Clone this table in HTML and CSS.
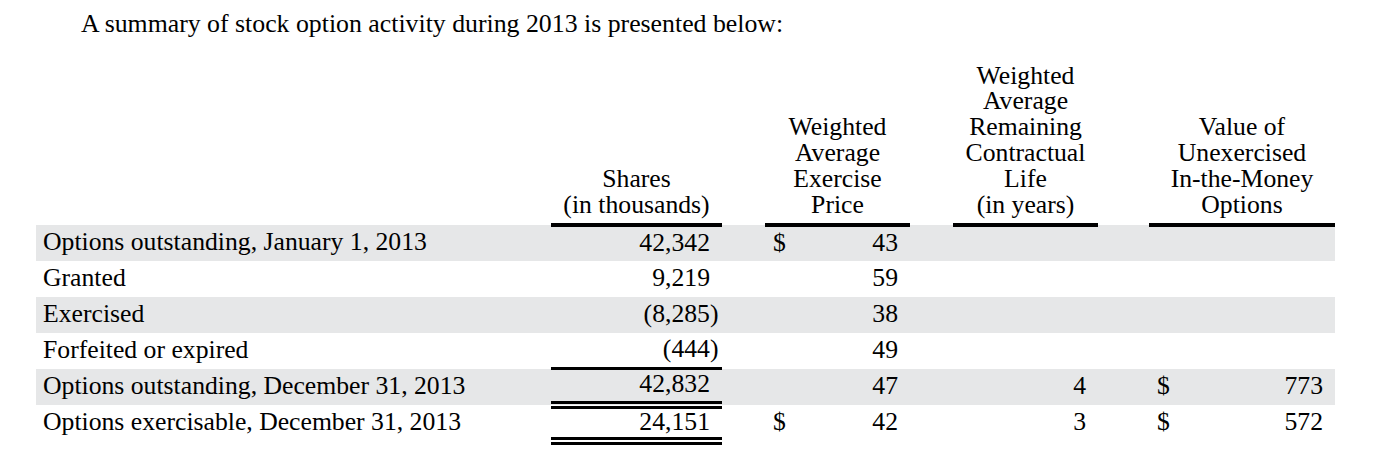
FILE: index.html
```html
<!DOCTYPE html>
<html lang="en">
<head>
<meta charset="utf-8">
<title>Stock option activity</title>
<link rel="stylesheet" href="styles.css">
</head>
<body>
<div class="page">
  <p class="intro">A summary of stock option activity during 2013 is presented below:</p>
  <div class="table">
    <div class="row head">
      <div class="cell"></div>
      <div class="cell hd">Shares<br>(in thousands)</div>
      <div class="cell"></div>
      <div class="cell hd">Weighted<br>Average<br>Exercise<br>Price</div>
      <div class="cell"></div>
      <div class="cell hd">Weighted<br>Average<br>Remaining<br>Contractual<br>Life<br>(in years)</div>
      <div class="cell"></div>
      <div class="cell hd">Value of<br>Unexercised<br>In-the-Money<br>Options</div>
    </div>
    <div class="row shade first">
      <div class="cell label">Options outstanding, January 1, 2013</div>
      <div class="cell num col">42,342</div>
      <div class="cell"></div>
      <div class="cell num cur col"><span>$</span><span>43</span></div>
      <div class="cell"></div>
      <div class="cell num col"></div>
      <div class="cell"></div>
      <div class="cell num col"></div>
    </div>
    <div class="row">
      <div class="cell label">Granted</div>
      <div class="cell num">9,219</div>
      <div class="cell"></div>
      <div class="cell num">59</div>
      <div class="cell"></div>
      <div class="cell num"></div>
      <div class="cell"></div>
      <div class="cell num"></div>
    </div>
    <div class="row shade">
      <div class="cell label">Exercised</div>
      <div class="cell num">(8,285<span class="paren">)</span></div>
      <div class="cell"></div>
      <div class="cell num">38</div>
      <div class="cell"></div>
      <div class="cell num"></div>
      <div class="cell"></div>
      <div class="cell num"></div>
    </div>
    <div class="row">
      <div class="cell label">Forfeited or expired</div>
      <div class="cell num rule-below">(444<span class="paren">)</span></div>
      <div class="cell"></div>
      <div class="cell num">49</div>
      <div class="cell"></div>
      <div class="cell num"></div>
      <div class="cell"></div>
      <div class="cell num"></div>
    </div>
    <div class="row shade">
      <div class="cell label">Options outstanding, December 31, 2013</div>
      <div class="cell num rule-above dbl-below">42,832</div>
      <div class="cell"></div>
      <div class="cell num">47</div>
      <div class="cell"></div>
      <div class="cell num">4</div>
      <div class="cell"></div>
      <div class="cell num cur"><span>$</span><span>773</span></div>
    </div>
    <div class="row">
      <div class="cell label">Options exercisable, December 31, 2013</div>
      <div class="cell num dbl-above dbl-below">24,151</div>
      <div class="cell"></div>
      <div class="cell num cur"><span>$</span><span>42</span></div>
      <div class="cell"></div>
      <div class="cell num">3</div>
      <div class="cell"></div>
      <div class="cell num cur"><span>$</span><span>572</span></div>
    </div>
    <div class="row foot">
      <div class="cell"></div>
      <div class="cell dbl-above"></div>
      <div class="cell"></div>
      <div class="cell"></div>
      <div class="cell"></div>
      <div class="cell"></div>
      <div class="cell"></div>
      <div class="cell"></div>
    </div>
  </div>
</div>
</body>
</html>
```

FILE: styles.css
```css
html, body {
  margin: 0;
  padding: 0;
  background: #ffffff;
}

body {
  font-family: "Liberation Serif", "Times New Roman", serif;
  color: #000000;
}

.page {
  width: 1396px;
}

.intro {
  margin: 0;
  padding: 9px 0 0 81px;
  font-size: 25.8px;
  line-height: 30px;
}

.table {
  margin: 22px 0 0 36px;
  width: 1299px;
  font-size: 25.7px;
}

.row {
  display: grid;
  grid-template-columns: 515px 171px 43px 145px 43px 145px 51px 186px;
  grid-template-rows: 36px;
  height: 36px;
}

.row.shade {
  background: #e6e7e8;
}

.row.head {
  grid-template-rows: 164px;
  height: 164px;
  align-items: end;
}

.row.foot {
  grid-template-rows: 4px;
  height: 4px;
}

.cell {
  box-sizing: border-box;
  min-width: 0;
  min-height: 0;
}

.hd {
  text-align: center;
  line-height: 25.9px;
  padding-bottom: 5px;
  border-bottom: 2px solid #000;
  white-space: nowrap;
}

.label,
.num {
  display: flex;
  align-items: center;
  line-height: 28px;
  padding-bottom: 3px;
  white-space: nowrap;
}

.label {
  padding-left: 7px;
}

.num {
  justify-content: flex-end;
  padding-right: 12px;
}

.num.cur {
  justify-content: space-between;
  padding-left: 8px;
}

.paren {
  margin-right: -8.5px;
}

.first .col {
  border-top: 2px solid #000;
}

.rule-below {
  border-bottom: 2px solid #000;
}

.rule-above {
  border-top: 1px solid #000;
}

.dbl-below {
  border-bottom: 3px solid #000;
  margin-bottom: 1px;
}

.dbl-above {
  border-top: 3px solid #000;
  margin-top: 1px;
}

.foot .dbl-above {
  height: 3px;
}
```
